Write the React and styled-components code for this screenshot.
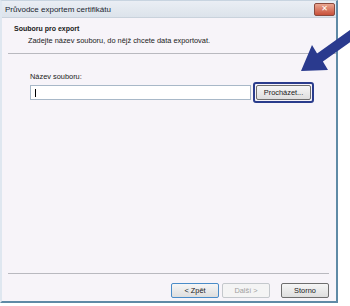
import styled, { createGlobalStyle } from "styled-components";

const Global = createGlobalStyle`
  html, body { margin: 0; padding: 0; background: #ffffff; }
  body { font-family: "Liberation Sans", "DejaVu Sans", sans-serif; }
`;

const Page = styled.div`
  position: relative;
  width: 350px;
  height: 306px;
  overflow: hidden;
`;

const Window = styled.div`
  width: 338px;
  height: 303px;
  box-sizing: border-box;
  border-left: 2px solid #dfe7f0;
  border-top: 1px solid #c8d4e0;
  border-right: 2px solid #5f8aa6;
  border-bottom: 2px solid #5f8aa6;
  display: flex;
  flex-direction: column;
  background: #f7f4f9;
`;

const TitleBar = styled.div`
  height: 16px;
  display: flex;
  align-items: center;
  justify-content: space-between;
  padding: 0 1px 0 3px;
  background: linear-gradient(#eaeef4, #dce3eb);
  border-bottom: 1px solid #c9d2dc;
  font-size: 8px;
  color: #1a2530;
`;

const CloseButton = styled.div`
  width: 19px;
  height: 11px;
  border-radius: 2px;
  border: 1px solid #8a4a3e;
  background: linear-gradient(#eaa690, #c8503a);
  color: #fff;
  font-size: 8px;
  font-weight: bold;
  display: flex;
  align-items: center;
  justify-content: center;
  line-height: 1;
`;

const Header = styled.div`
  height: 28px;
  padding: 7px 0 0 6px;
  margin-left: 6px;
  border-bottom: 1px solid #b9b9bf;
`;

const HeaderTitle = styled.div`
  font-size: 7px;
  font-weight: bold;
  color: #202020;
`;

const HeaderText = styled.div`
  font-size: 7.4px;
  color: #202020;
  margin: 4px 0 0 14px;
`;

const Body = styled.div`
  flex: 1;
  padding: 18px 0 0 28px;
`;

const Label = styled.div`
  font-size: 7.4px;
  color: #202020;
  margin-bottom: 1px;
`;

const Row = styled.div`
  display: flex;
  align-items: center;
  gap: 2px;
`;

const Input = styled.div`
  width: 221px;
  height: 15px;
  box-sizing: border-box;
  border: 1px solid #a8b8c8;
  background: #ffffff;
  display: flex;
  align-items: center;
  padding-left: 4px;
`;

const Caret = styled.div`
  width: 1px;
  height: 8px;
  background: #000;
`;

const Focus = styled.div`
  padding: 1px;
  border: 2px solid #2a3c8c;
  border-radius: 3px;
`;

const Button = styled.div`
  width: ${(p) => p.w || 48}px;
  height: 15px;
  box-sizing: border-box;
  border: 1px solid ${(p) => (p.disabled ? "#c4c8cc" : p.def ? "#4a8cc8" : "#6e6e6e")};
  border-radius: 2px;
  background: ${(p) => (p.disabled ? "#f4f4f4" : "linear-gradient(#f6f6f6, #dedede)")};
  color: ${(p) => (p.disabled ? "#a0a0a0" : "#202020")};
  font-size: 7.4px;
  display: flex;
  align-items: center;
  justify-content: center;
`;

const Footer = styled.div`
  margin: 0 7px 0 6px;
  border-top: 1px solid #b9b9bf;
  padding: 9px 0 3px;
  display: flex;
  justify-content: flex-end;
  gap: 3px;
`;

const Spacer = styled.div`
  width: 5px;
`;

const Arrow = styled.svg`
  position: absolute;
  left: 295px;
  top: 20px;
`;

export default function App() {
  return (
    <Page>
      <Global />
      <Window>
        <TitleBar>
          <span>Průvodce exportem certifikátu</span>
          <CloseButton>✕</CloseButton>
        </TitleBar>
        <Header>
          <HeaderTitle>Souboru pro export</HeaderTitle>
          <HeaderText>Zadejte název souboru, do nějž chcete data exportovat.</HeaderText>
        </Header>
        <Body>
          <Label>Název souboru:</Label>
          <Row>
            <Input>
              <Caret />
            </Input>
            <Focus>
              <Button w={55}>Procházet...</Button>
            </Focus>
          </Row>
        </Body>
        <Footer>
          <Button def>&lt; Zpět</Button>
          <Button disabled>Další &gt;</Button>
          <Spacer />
          <Button>Storno</Button>
        </Footer>
      </Window>
      <Arrow width="55" height="60" viewBox="0 0 55 60">
        <polygon
          points="6,51 17,25 22.1,33.4 58.8,7.3 64.6,15.5 27.9,41.6 33,50"
          fill="#2a3a8e"
        />
      </Arrow>
    </Page>
  );
}
